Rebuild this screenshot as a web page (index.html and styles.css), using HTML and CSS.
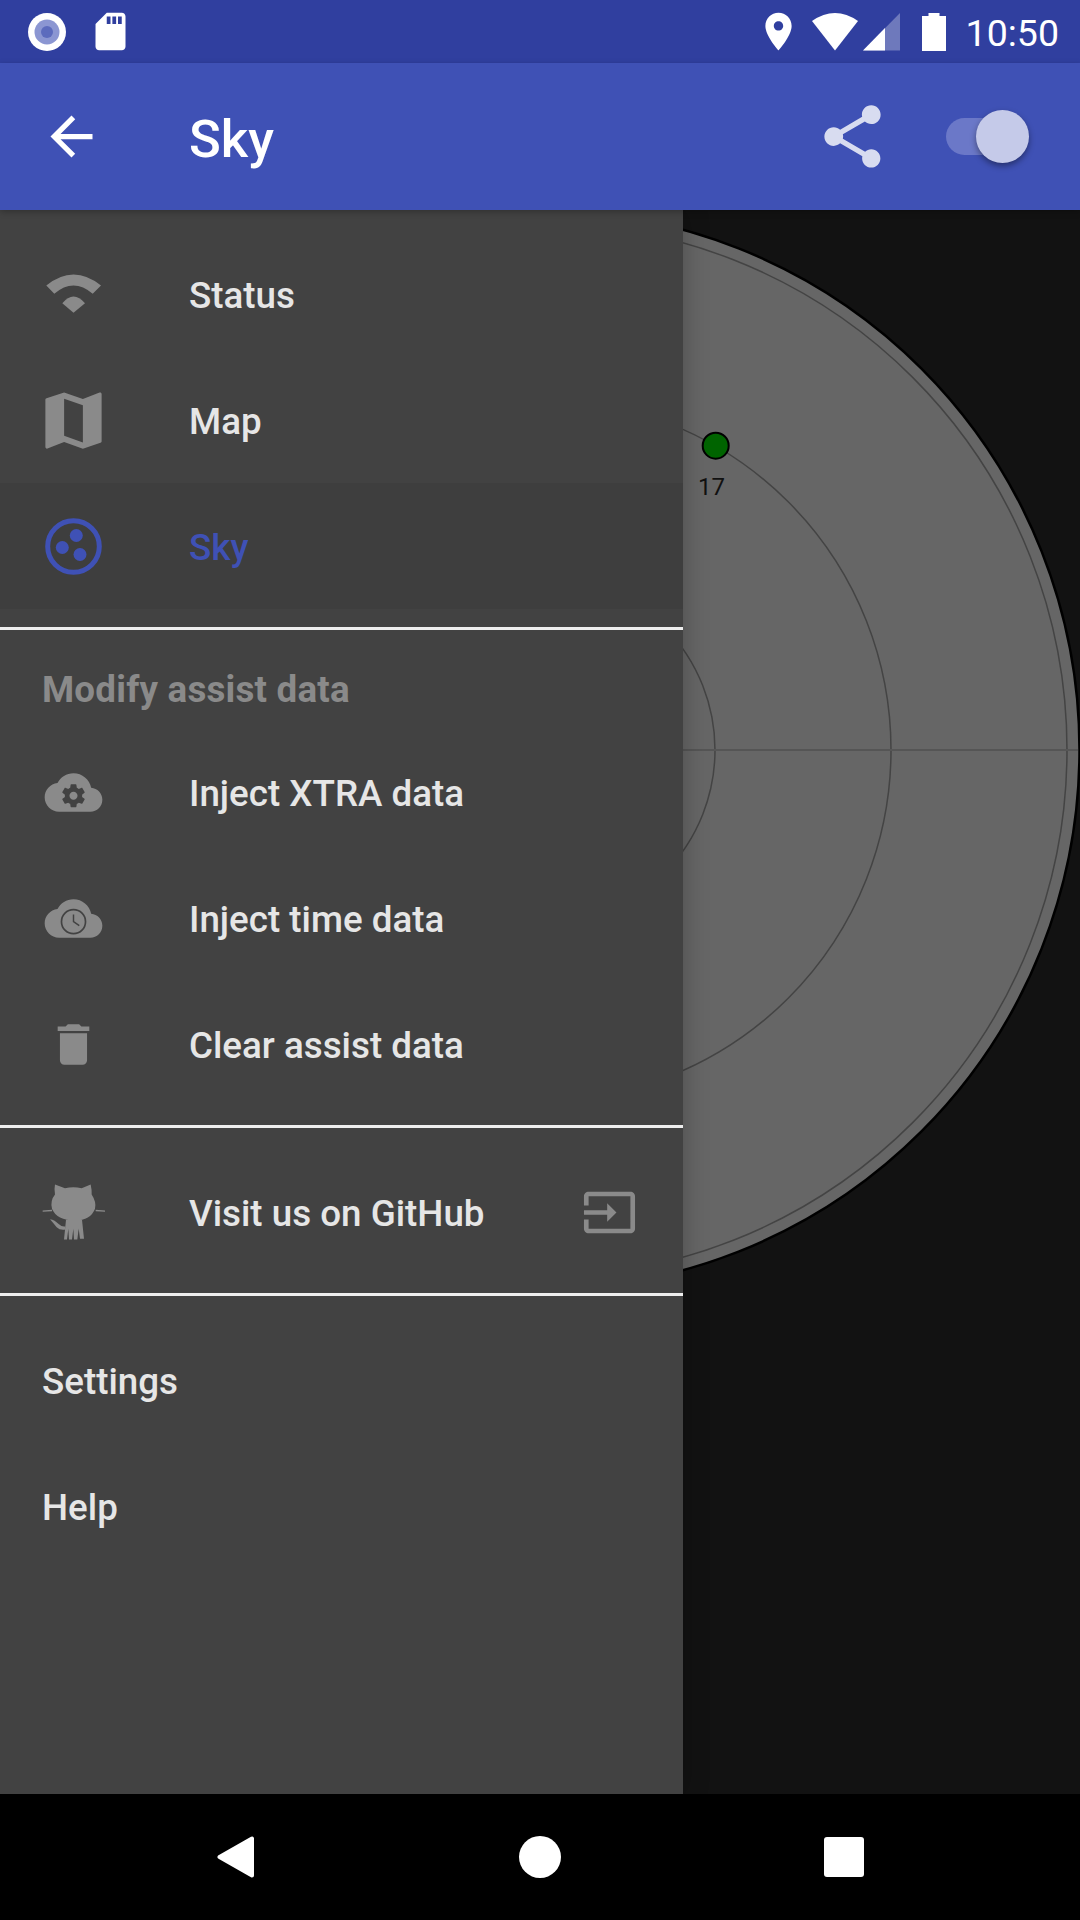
FILE: index.html
```html
<!DOCTYPE html>
<html lang="en">

<head>
    <meta charset="UTF-8">
    <meta name="viewport" content="width=device-width, initial-scale=1.0">
    <title>Sky</title>
    <link rel="stylesheet" href="styles.css">
</head>

<body>
    <div class="screen">
        <!-- Status bar -->
        <div class="status-bar">
            <svg class="rec-icon" viewBox="0 0 38 38">
                <circle cx="19" cy="19" r="19" fill="#fff" />
                <circle cx="19" cy="19" r="12.500" fill="#8b96d2" />
                <circle cx="19" cy="19" r="6" fill="#5c6bbd" />
            </svg>
            <svg class="sd-icon" viewBox="0 0 24 24" fill="#fff">
                <path d="M18 2h-8L4.020 8 4 20c0 1.100.9 2 2 2h12c1.100 0 2-.9 2-2V4c0-1.100-.9-2-2-2zm-6 6h-2V4h2v4zm3 0h-2V4h2v4zm3 0h-2V4h2v4z" />
            </svg>
            <svg class="pin-icon" viewBox="0 0 24 24" fill="#fff">
                <path d="M12 2C8.130 2 5 5.130 5 9c0 5.250 7 13 7 13s7-7.750 7-13c0-3.870-3.130-7-7-7zm0 9.500c-1.380 0-2.500-1.120-2.500-2.500s1.120-2.500 2.500-2.500 2.500 1.120 2.500 2.500-1.120 2.500-2.500 2.500z" />
            </svg>
            <svg class="wifi-icon" viewBox="0 0 46 38" fill="#fff">
                <path d="M0 8Q23 -8 46 8L23 37.500Z" />
            </svg>
            <svg class="signal-icon" viewBox="0 0 37 38">
                <path d="M0 37.500L37 0V37.500Z" fill="#fff" fill-opacity="0.3" />
                <path d="M0 37.500L22 15V37.500Z" fill="#fff" />
            </svg>
            <svg class="battery-icon" viewBox="0 0 24 38" fill="#fff">
                <path d="M6.500 0H17.500V3H24V38H0V3H6.500Z" />
            </svg>
            <span class="clock">10:50</span>
        </div>

        <!-- App bar -->
        <div class="app-bar">
            <svg class="back-icon" viewBox="0 0 24 24" fill="#fff">
                <path d="M20 11H7.830l5.590-5.590L12 4l-8 8 8 8 1.410-1.410L7.830 13H20v-2z" />
            </svg>
            <div class="title">Sky</div>
            <svg class="share-icon" viewBox="0 0 24 24" fill="#fff" fill-opacity="0.8">
                <path d="M18 16.080c-.76 0-1.440.3-1.960.77L8.910 12.700c.05-.23.09-.46.09-.7s-.04-.47-.09-.7l7.050-4.110c.54.5 1.250.81 2.040.81 1.660 0 3-1.340 3-3s-1.340-3-3-3-3 1.340-3 3c0 .24.04.47.09.7L8.040 9.810C7.500 9.310 6.790 9 6 9c-1.660 0-3 1.340-3 3s1.340 3 3 3c.79 0 1.500-.31 2.040-.81l7.120 4.160c-.05.21-.08.43-.08.65 0 1.610 1.310 2.920 2.920 2.920 1.610 0 2.920-1.310 2.920-2.920s-1.310-2.920-2.920-2.920z" />
            </svg>
            <div class="switch">
                <div class="switch-track"></div>
                <div class="switch-thumb"></div>
            </div>
        </div>

        <div class="main">
            <!-- Sky plot -->
            <svg class="sky" viewBox="0 0 1080 1584">
                <circle cx="540" cy="540" r="539.500" fill="#666" stroke="#000" stroke-width="2.500" />
                <circle cx="540" cy="540" r="527" fill="none" stroke="#444" stroke-width="1.500" />
                <circle cx="540" cy="540" r="351" fill="none" stroke="#444" stroke-width="1.500" />
                <circle cx="540" cy="540" r="175" fill="none" stroke="#444" stroke-width="1.500" />
                <line x1="1" y1="540" x2="1078" y2="540" stroke="#555" stroke-width="2" />
                <circle cx="715.700" cy="235.700" r="13" fill="#006400" stroke="#000" stroke-width="2" />
                <text class="sat-label" x="698" y="285">17</text>
            </svg>

            <!-- Drawer -->
            <div class="drawer">
                <div class="row">
                    <svg class="row-icon" viewBox="-6 -6 75 75" fill="#8a8a8a">
                        <path d="M4.300 22.500Q31.500 .5 59 22.500L50.700 30.800Q31.500 14.200 12.300 30.800Z" />
                        <path d="M20.300 40.200Q31.500 26.800 43 40.200L31.500 49.800Z" />
                    </svg>
                    <span>Status</span>
                </div>
                <div class="row">
                    <svg class="row-icon" viewBox="0 0 24 24" fill="#8a8a8a">
                        <path d="M20.500 3l-.16.03L15 5.100 9 3 3.360 4.900c-.21.07-.36.25-.36.48V20.500c0 .28.22.5.5.5l.16-.03L9 18.900l6 2.100 5.640-1.900c.21-.07.36-.25.36-.48V3.500c0-.28-.22-.5-.5-.5zM15 19l-6-2.110V5l6 2.110V19z" />
                    </svg>
                    <span>Map</span>
                </div>
                <div class="row selected">
                    <svg class="row-icon" viewBox="0 0 75 75" fill="#3f51b5">
                        <circle cx="37.500" cy="37.500" r="25.800" fill="none" stroke="#3f51b5" stroke-width="5" />
                        <circle cx="40.300" cy="26.500" r="6.500" />
                        <circle cx="26.300" cy="38.500" r="6.500" />
                        <circle cx="44" cy="45.500" r="6.500" />
                    </svg>
                    <span>Sky</span>
                </div>

                <div class="divider"></div>

                <div class="section-title">Modify assist data</div>
                <div class="row">
                    <svg class="row-icon" viewBox="-3.600 -3.600 31.200 31.200" fill="#8a8a8a">
                        <path d="M19.350 10.040C18.670 6.590 15.640 4 12 4 9.110 4 6.600 5.640 5.350 8.040 2.340 8.360 0 10.910 0 14c0 3.310 2.690 6 6 6h13c2.760 0 5-2.240 5-5 0-2.640-2.050-4.780-4.650-4.960z" />
                        <path transform="translate(6.240 7.600) scale(0.48)" fill="#424242" d="M19.430 12.980c.04-.32.07-.64.07-.98s-.03-.66-.07-.98l2.110-1.650c.19-.15.24-.42.12-.64l-2-3.460c-.12-.22-.39-.3-.61-.22l-2.490 1c-.52-.4-1.080-.73-1.690-.98l-.38-2.650C14.460 2.180 14.250 2 14 2h-4c-.25 0-.46.18-.49.42l-.38 2.650c-.61.25-1.170.59-1.690.98l-2.490-1c-.23-.09-.49 0-.61.22l-2 3.460c-.13.22-.07.49.12.64l2.110 1.650c-.04.32-.07.65-.07.98s.03.66.07.98l-2.110 1.650c-.19.15-.24.42-.12.64l2 3.460c.12.22.39.3.61.22l2.490-1c.52.4 1.080.73 1.690.98l.38 2.650c.03.24.24.42.49.42h4c.25 0 .46-.18.49-.42l.38-2.650c.61-.25 1.170-.59 1.690-.98l2.490 1c.23.09.49 0 .61-.22l2-3.460c.12-.22.07-.49-.12-.64l-2.110-1.650zM12 15.500c-1.930 0-3.500-1.570-3.500-3.500s1.570-3.500 3.500-3.500 3.500 1.570 3.500 3.500-1.570 3.500-3.500 3.500z" />
                    </svg>
                    <span>Inject XTRA data</span>
                </div>
                <div class="row">
                    <svg class="row-icon" viewBox="-3.600 -3.600 31.200 31.200" fill="#8a8a8a">
                        <path d="M19.350 10.040C18.670 6.590 15.640 4 12 4 9.110 4 6.600 5.640 5.350 8.040 2.340 8.360 0 10.910 0 14c0 3.310 2.690 6 6 6h13c2.760 0 5-2.240 5-5 0-2.640-2.050-4.780-4.650-4.960z" />
                        <circle cx="12" cy="13.300" r="5" fill="none" stroke="#424242" stroke-width="0.700" />
                        <path d="M12 10.300V13.300L14.400 15" fill="none" stroke="#424242" stroke-width="0.600" />
                    </svg>
                    <span>Inject time data</span>
                </div>
                <div class="row">
                    <svg class="row-icon" viewBox="-4.600 -4.600 33.200 33.200" fill="#8a8a8a">
                        <path d="M6 19c0 1.100.9 2 2 2h8c1.100 0 2-.9 2-2V7H6v12zM19 4h-3.500l-1-1h-5l-1 1H5v2h14V4z" />
                    </svg>
                    <span>Clear assist data</span>
                </div>

                <div class="divider"></div>

                <div class="row">
                    <svg class="row-icon" viewBox="108 163.500 225 225" fill="#8a8a8a">
                        <path d="M165 192L195 203Q220 198 245 203L272 192Q276 210 275 222Q290 245 285 265Q272 300 225 300Q170 300 156 265Q150 240 165 222Q162 205 165 192Z" />
                        <path d="M198 298H246L252 355H240L236 325L232 357H222L220 325L216 357H207L205 325L201 357H192Z" />
                        <path d="M150 296Q165 298 175 310Q185 320 196 318V327Q180 330 170 320Q158 305 150 296Z" />
                        <path d="M128 270L156 268V272L128 274ZM315 270L287 268V272L315 274Z" />
                    </svg>
                    <span>Visit us on GitHub</span>
                    <svg class="row-end-icon" viewBox="-4.150 -4.150 32.300 32.300" fill="#8a8a8a">
                        <path d="M21 3.010H3c-1.100 0-2 .9-2 2V9h2V4.990h18v14.030H3V15H1v4.010c0 1.100.9 1.980 2 1.980h18c1.100 0 2-.88 2-1.980v-14c0-1.110-.9-2-2-2zM11 16l4-4-4-4v3H1v2h10v3z" />
                    </svg>
                </div>

                <div class="divider"></div>

                <div class="row plain">Settings</div>
                <div class="row plain">Help</div>
            </div>
        </div>

        <!-- Navigation bar -->
        <div class="nav-bar">
            <svg class="nav-back" viewBox="0 0 37 42" fill="#fff" stroke="#fff" stroke-width="4" stroke-linejoin="round">
                <path d="M2.500 21L35 2.500V39.500Z" />
            </svg>
            <div class="nav-home"></div>
            <div class="nav-recent"></div>
        </div>
    </div>
</body>

</html>
```
FILE: styles.css
```css
body {
    margin: 0;
    font-family: Roboto, "Noto Sans", sans-serif;
    background-color: #000;
}

.screen {
    width: 1080px;
    height: 1920px;
    display: flex;
    flex-direction: column;
    overflow: hidden;
}

/* Status bar */
.status-bar {
    height: 63px;
    flex: none;
    display: flex;
    align-items: center;
    padding: 0 21px 0 28px;
    background-color: #303f9f;
    box-sizing: border-box;
}

.rec-icon {
    width: 38px;
    height: 38px;
}

.sd-icon {
    width: 45px;
    height: 45px;
    margin-left: 22px;
}

.pin-icon {
    width: 45px;
    height: 45px;
    margin-left: auto;
}

.wifi-icon {
    width: 46px;
    height: 38px;
    margin-left: 11px;
}

.signal-icon {
    width: 37px;
    height: 38px;
    margin-left: 5px;
}

.battery-icon {
    width: 24px;
    height: 38px;
    margin-left: 22px;
}

.clock {
    margin-left: 20px;
    padding-top: 2px;
    font-size: 37.500px;
    color: #fff;
}

/* App bar */
.app-bar {
    height: 147px;
    flex: none;
    display: flex;
    align-items: center;
    padding: 0 51px 0 40px;
    background-color: #3f51b5;
    box-sizing: border-box;
    position: relative;
    z-index: 2;
    box-shadow: 0 2px 6px rgba(0, 0, 0, 0.25);
}

.back-icon {
    width: 63px;
    height: 63px;
}

.title {
    margin-left: 86px;
    padding-top: 4px;
    font-size: 52.500px;
    font-weight: 500;
    color: #fff;
}

.share-icon {
    width: 75px;
    height: 75px;
    margin-left: auto;
}

.switch {
    width: 83px;
    height: 53px;
    margin-left: 56px;
    position: relative;
    display: flex;
    align-items: center;
}

.switch-track {
    width: 72px;
    height: 37px;
    border-radius: 19px;
    background-color: #6b78c8;
}

.switch-thumb {
    position: absolute;
    top: 0;
    right: 0;
    width: 53px;
    height: 53px;
    border-radius: 50%;
    background-color: #c5cae9;
    box-shadow: 0 3px 6px rgba(0, 0, 0, 0.4);
}

/* Sky plot and drawer */
.main {
    flex: 1;
    position: relative;
    background-color: #121212;
}

.sky {
    display: block;
    width: 1080px;
    height: 1584px;
}

.sat-label {
    font-family: Roboto, sans-serif;
    font-size: 24px;
    fill: #111;
}

.drawer {
    position: absolute;
    top: 0;
    bottom: 0;
    left: 0;
    width: 683px;
    padding-top: 21px;
    background-color: #424242;
    box-sizing: border-box;
    box-shadow: 0 0 24px rgba(0, 0, 0, 0.25);
}

.row {
    height: 126px;
    display: flex;
    align-items: center;
    padding: 0 36px;
    font-size: 36.750px;
    font-weight: 500;
    color: #e6e6e6;
    box-sizing: border-box;
}

.row span {
    margin-left: 78px;
    padding-top: 2px;
}

.row.selected {
    background-color: #3e3e3e;
    color: #3f51b5;
}

.row.plain {
    padding: 2px 0 0 42px;
}

.row-icon {
    width: 75px;
    height: 75px;
    flex: none;
}

.row-end-icon {
    width: 75px;
    height: 75px;
    margin-left: auto;
}

.divider {
    height: 3px;
    margin: 18px 0 21px;
    background-color: #eeeeee;
}

.section-title {
    height: 78px;
    line-height: 78px;
    padding-left: 42px;
    font-size: 36.750px;
    font-weight: 700;
    letter-spacing: 0.2px;
    color: #8a8a8a;
}

/* Navigation bar */
.nav-bar {
    height: 126px;
    flex: none;
    display: flex;
    align-items: center;
    justify-content: space-between;
    padding: 0 216px 0 217px;
    background-color: #000;
    box-sizing: border-box;
}

.nav-back {
    width: 37px;
    height: 42px;
}

.nav-home {
    width: 42px;
    height: 42px;
    margin-left: 2px;
    border-radius: 50%;
    background-color: #fff;
}

.nav-recent {
    width: 40px;
    height: 40px;
    border-radius: 3px;
    background-color: #fff;
}
```
